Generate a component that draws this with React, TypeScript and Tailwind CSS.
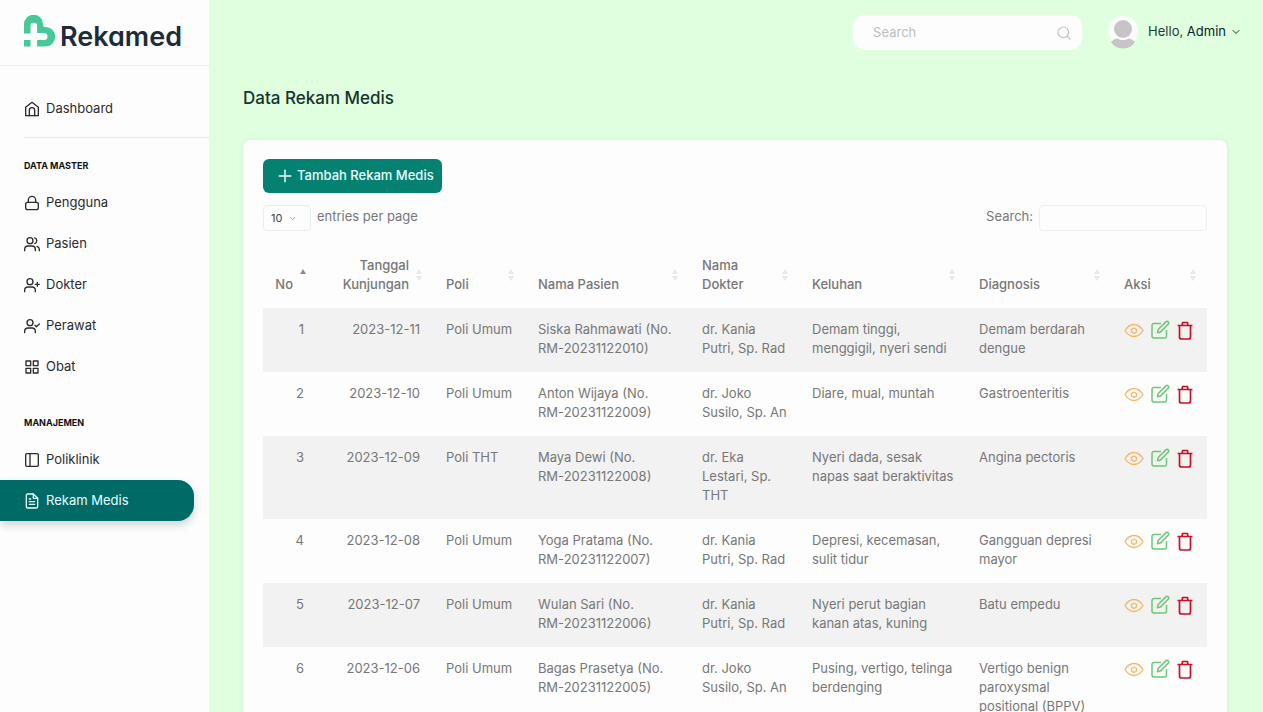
import type { ReactNode } from "react";
import clsx from "clsx";
import { ChevronDown, Plus, Search } from "lucide-react";

type IconProps = { children: ReactNode };

const MenuIcon = ({ children }: IconProps) => (
  <svg
    viewBox="0 0 24 24"
    className="size-4 shrink-0"
    fill="none"
    stroke="currentColor"
    strokeWidth={2}
    strokeLinecap="round"
    strokeLinejoin="round"
    aria-hidden="true"
  >
    {children}
  </svg>
);

const icons = {
  home: (
    <MenuIcon>
      <path d="M2.500 22V9.500L12 2l9.500 7.500V22Z" />
      <path d="M8 22v-8a4 4 0 0 1 8 0v8" />
    </MenuIcon>
  ),
  lock: (
    <MenuIcon>
      <rect x="2.500" y="11" width="19" height="11" rx="3" />
      <path d="M6.500 11V7.500a5.500 5.500 0 0 1 11 0V11" />
    </MenuIcon>
  ),
  users: (
    <MenuIcon>
      <circle cx="9" cy="7" r="4.500" />
      <path d="M1 22v-2a5 5 0 0 1 5-5h6a5 5 0 0 1 5 5v2" />
      <path d="M16 2.700a4.500 4.500 0 0 1 0 8.600" />
      <path d="M19.500 15.500a5 5 0 0 1 3.500 4.500v2" />
    </MenuIcon>
  ),
  userPlus: (
    <MenuIcon>
      <circle cx="9" cy="7" r="4.500" />
      <path d="M1 22v-2a5 5 0 0 1 5-5h6a5 5 0 0 1 5 5v2" />
      <path d="M20 8v6M17 11h6" />
    </MenuIcon>
  ),
  userCheck: (
    <MenuIcon>
      <circle cx="9" cy="7" r="4.500" />
      <path d="M1 22v-2a5 5 0 0 1 5-5h6a5 5 0 0 1 5 5v2" />
      <path d="m16.500 11 2.200 2.200L23 9" />
    </MenuIcon>
  ),
  grid: (
    <MenuIcon>
      <path d="M3 3h7v7H3zM14 3h7v7h-7zM3 14h7v7H3zM14 14h7v7h-7z" />
    </MenuIcon>
  ),
  layout: (
    <MenuIcon>
      <rect x="2.500" y="2.500" width="19" height="19" rx="2" />
      <path d="M9 2.500v19" />
    </MenuIcon>
  ),
  file: (
    <MenuIcon>
      <path d="M14 1.500H5.500a2 2 0 0 0-2 2v17a2 2 0 0 0 2 2h13a2 2 0 0 0 2-2V8Z" />
      <path d="M14 1.500V8h6.500M8 9h2M8 13h8M8 17h8" />
    </MenuIcon>
  ),
};

const masterLinks = [
  { label: "Pengguna", href: "#pengguna", icon: icons.lock },
  { label: "Pasien", href: "#pasien", icon: icons.users },
  { label: "Dokter", href: "#dokter", icon: icons.userPlus },
  { label: "Perawat", href: "#perawat", icon: icons.userCheck },
  { label: "Obat", href: "#obat", icon: icons.grid },
];

const manajemenLinks = [
  { label: "Poliklinik", href: "#poliklinik", icon: icons.layout },
  { label: "Rekam Medis", href: "#rekam-medis", icon: icons.file, active: true },
];

const columns = [
  { label: "No", width: "w-[54px]", numeric: true, sorted: true },
  { label: "Tanggal Kunjungan", width: "w-[116px]", numeric: true },
  { label: "Poli", width: "w-[92px]" },
  { label: "Nama Pasien", width: "w-[164px]" },
  { label: "Nama Dokter", width: "w-[110px]" },
  { label: "Keluhan", width: "w-[167px]" },
  { label: "Diagnosis", width: "w-[145px]" },
  { label: "Aksi", width: "w-[96px]" },
];

const records = [
  {
    tanggal: "2023-12-11",
    poli: "Poli Umum",
    pasien: "Siska Rahmawati",
    noRm: "RM-20231122010",
    dokter: "dr. Kania Putri, Sp. Rad",
    keluhan: "Demam tinggi, menggigil, nyeri sendi",
    diagnosis: "Demam berdarah dengue",
  },
  {
    tanggal: "2023-12-10",
    poli: "Poli Umum",
    pasien: "Anton Wijaya",
    noRm: "RM-20231122009",
    dokter: "dr. Joko Susilo, Sp. An",
    keluhan: "Diare, mual, muntah",
    diagnosis: "Gastroenteritis",
  },
  {
    tanggal: "2023-12-09",
    poli: "Poli THT",
    pasien: "Maya Dewi",
    noRm: "RM-20231122008",
    dokter: "dr. Eka Lestari, Sp. THT",
    keluhan: "Nyeri dada, sesak napas saat beraktivitas",
    diagnosis: "Angina pectoris",
  },
  {
    tanggal: "2023-12-08",
    poli: "Poli Umum",
    pasien: "Yoga Pratama",
    noRm: "RM-20231122007",
    dokter: "dr. Kania Putri, Sp. Rad",
    keluhan: "Depresi, kecemasan, sulit tidur",
    diagnosis: "Gangguan depresi mayor",
  },
  {
    tanggal: "2023-12-07",
    poli: "Poli Umum",
    pasien: "Wulan Sari",
    noRm: "RM-20231122006",
    dokter: "dr. Kania Putri, Sp. Rad",
    keluhan: "Nyeri perut bagian kanan atas, kuning",
    diagnosis: "Batu empedu",
  },
  {
    tanggal: "2023-12-06",
    poli: "Poli Umum",
    pasien: "Bagas Prasetya",
    noRm: "RM-20231122005",
    dokter: "dr. Joko Susilo, Sp. An",
    keluhan: "Pusing, vertigo, telinga berdenging",
    diagnosis: "Vertigo benign paroxysmal positional (BPPV)",
  },
];

const Logo = () => (
  <a href="#" className="flex items-start gap-1" aria-label="Rekamed">
    <svg viewBox="0 0 32 32" className="size-8" aria-hidden="true">
      <path
        d="M0 31.500V9.500a9.500 9.500 0 0 1 19-.500l.800 3H21.500a9.700 9.700 0 0 1 0 19.500Z"
        fill="#45c998"
      />
      <path
        d="M6.500 32V11a3.300 3.300 0 0 1 6.600 0v7H20a3.500 3.500 0 0 1 0 7h-6.900v7ZM0 18.500h7V25H0Z"
        fill="#fdfdfd"
      />
    </svg>
    <span className="pt-1.5 text-[27px] leading-8 font-semibold text-[#1d2b3c] [font-feature-settings:'cv11']">
      Rekamed
    </span>
  </a>
);

type MenuLinkProps = {
  label: string;
  href: string;
  icon: ReactNode;
  active?: boolean;
};

const MenuLink = ({ label, href, icon, active }: MenuLinkProps) => (
  <a
    href={href}
    aria-current={active ? "page" : undefined}
    className={clsx(
      "mr-[15px] flex h-[41px] items-center gap-1.5 pl-6 text-[13px]",
      active
        ? "rounded-r-2xl bg-[#006a66] text-[#e6ffff] shadow-[0_4px_8px_rgba(0,60,60,0.2)]"
        : "text-[#2b2b2b]"
    )}
  >
    {icon}
    {label}
  </a>
);

const SortMark = ({ sorted }: { sorted?: boolean }) => (
  <svg
    viewBox="0 0 8 14"
    className="absolute right-2.5 bottom-[26px] h-3.5 w-2"
    aria-hidden="true"
  >
    <path d="M4 1l3 5H1z" fill={sorted ? "#8d8d8d" : "#e8e8e8"} />
    {!sorted && <path d="M4 13l3-5H1z" fill="#e8e8e8" />}
  </svg>
);

const RowActions = () => (
  <div className="flex gap-1.5">
    <button type="button" aria-label="Lihat" className="text-[#f5b765]">
      <svg viewBox="0 0 20 20" className="size-5" fill="none" stroke="currentColor" strokeWidth="1.300">
        <path d="M1 10.500C3.500 6.500 6.500 4.500 10 4.500s6.500 2 9 6c-2.500 4-5.500 6-9 6s-6.500-2-9-6Z" />
        <path d="M10 8l2.500 1.500v2.500L10 13.300 7.500 12V9.500Z" strokeLinejoin="round" />
      </svg>
    </button>
    <button type="button" aria-label="Ubah" className="text-[#6cc873]">
      <svg viewBox="0 0 20 20" className="size-5" fill="none" stroke="currentColor" strokeWidth="1.500" strokeLinejoin="round">
        <path d="M11 3.500H4A2 2 0 0 0 2 5.500V16a2 2 0 0 0 2 2h10.500a2 2 0 0 0 2-2V10" />
        <path d="M7.500 12.700l.700-3.200 7.600-7.600a1.600 1.600 0 0 1 2.400 2.400l-7.600 7.600Z" />
      </svg>
    </button>
    <button type="button" aria-label="Hapus" className="text-[#c41225]">
      <svg viewBox="0 0 20 20" className="size-5" fill="none" stroke="currentColor" strokeWidth="1.700" strokeLinejoin="round">
        <path d="M1.500 5.500h15M3.500 5.500V17a2 2 0 0 0 2 2h7a2 2 0 0 0 2-2V5.500M6 5.500l.600-3h4.800l.600 3" />
      </svg>
    </button>
  </div>
);

export default function App() {
  return (
    <div className="flex min-h-screen bg-[#dfffdf] font-['Inter','Liberation_Sans',sans-serif] text-[13px] text-[#777]">
      <aside className="sticky top-0 h-screen w-[209px] shrink-0 bg-[#fdfdfd]">
        <div className="flex h-[66px] items-start border-b border-[#eeeeee] pt-[15px] pl-6">
          <Logo />
        </div>
        <nav aria-label="Menu utama" className="pt-[22px]">
          <MenuLink label="Dashboard" href="#dashboard" icon={icons.home} />
          <hr className="mt-2 ml-6 border-[#e8e8e8]" />
          <h2 className="mt-5 mb-2 pl-6 text-[9px] leading-4 font-bold text-[#111]">
            DATA MASTER
          </h2>
          {masterLinks.map((link) => (
            <MenuLink key={link.label} {...link} />
          ))}
          <h2 className="mt-7 mb-2 pl-6 text-[9px] leading-4 font-bold text-[#111]">
            MANAJEMEN
          </h2>
          {manajemenLinks.map((link) => (
            <MenuLink key={link.label} {...link} />
          ))}
        </nav>
      </aside>

      <div className="min-w-0 flex-1">
        {/* Top bar */}
        <header className="flex h-16 items-center justify-end pr-[21px]">
          <div className="relative">
            <input
              type="search"
              aria-label="Search"
              placeholder="Search"
              className="h-[35px] w-[229px] rounded-xl bg-[#fdfdfd] pr-10 pl-5 placeholder:text-[#bdbdbd]"
            />
            <Search
              size={16}
              strokeWidth={1.8}
              className="absolute top-2.5 right-2.5 text-[#bcc4bc]"
              aria-hidden="true"
            />
          </div>
          <button type="button" className="ml-[26px] flex items-center text-[#1f3a34]">
            <svg viewBox="0 0 30 34" className="mr-2.5 h-[34px] w-[30px]" aria-hidden="true">
              <circle cx="15" cy="16" r="15" fill="#fbfdfb" />
              <circle cx="15" cy="14" r="9" fill="#c6c4c6" />
              <path d="M3 27q3-3.500 6-3.500 6 3 12 0 3 0 6 3.500-4 6.500-12 6.500T3 27Z" fill="#c6c4c6" />
            </svg>
            <span>
              Hello, <span className="text-[#08231f]">Admin</span>
            </span>
            <ChevronDown size={12} className="ml-1" aria-hidden="true" />
          </button>
        </header>

        <main className="pr-[36px] pl-[34px]">
          <h1 className="pt-[22px] text-[17px] leading-6 font-medium text-[#17332f]">
            Data Rekam Medis
          </h1>

          <section className="mt-[30px] rounded-lg bg-[#fdfdfd] px-5 pt-[19px] pb-5 shadow-[0_0_4px_rgba(120,160,120,0.15)]">
            <button
              type="button"
              className="flex h-[34px] items-center gap-0.5 rounded-md bg-[#058172] pr-2 pl-3 font-medium text-[#e8ffff]"
            >
              <Plus size={20} strokeWidth={1.8} aria-hidden="true" />
              Tambah Rekam Medis
            </button>

            <div className="mt-3 flex items-center justify-between">
              <div className="flex items-center gap-1.5">
                <div className="relative">
                  <select
                    id="page-size"
                    defaultValue="10"
                    className="h-[26px] w-12 appearance-none rounded-sm border border-[#ececec] pl-[7px] text-[11px] text-[#444]"
                  >
                    <option>10</option>
                    <option>25</option>
                    <option>50</option>
                  </select>
                  <ChevronDown
                    size={9}
                    className="pointer-events-none absolute top-[9px] right-3.5 text-[#888]"
                    aria-hidden="true"
                  />
                </div>
                <label htmlFor="page-size" className="pb-0.5">
                  entries per page
                </label>
              </div>
              <div className="flex items-center gap-1.5">
                <label htmlFor="table-search" className="pb-0.5">
                  Search:
                </label>
                <input
                  id="table-search"
                  type="search"
                  className="h-[26px] w-[168px] rounded-sm border border-[#eeeeee] px-2"
                />
              </div>
            </div>

            <table className="mt-[13px] w-full table-fixed text-left leading-[19px]">
              <thead>
                <tr>
                  {columns.map((column) => (
                    <th
                      key={column.label}
                      scope="col"
                      aria-sort={column.sorted ? "ascending" : undefined}
                      className={clsx(
                        "relative pt-3 pr-6 pb-3.5 align-bottom font-medium",
                        column.width,
                        column.numeric ? "text-right" : "pl-[13px]"
                      )}
                    >
                      {column.label}
                      <SortMark sorted={column.sorted} />
                    </th>
                  ))}
                </tr>
              </thead>
              <tbody>
                {records.map((record, index) => (
                  <tr
                    key={record.tanggal}
                    className="align-top odd:bg-[#f2f2f2] [&>td]:pt-3 [&>td]:pb-3.5 [&>td]:pl-[13px]"
                  >
                    <td className="pr-[13px] text-right">{index + 1}</td>
                    <td className="pr-[13px] text-right whitespace-nowrap">{record.tanggal}</td>
                    <td className="whitespace-nowrap">{record.poli}</td>
                    <td className="pr-2.5">
                      {record.pasien} (No. <span className="whitespace-nowrap">{record.noRm})</span>
                    </td>
                    <td className="pr-2.5">{record.dokter}</td>
                    <td className="pr-2.5">{record.keluhan}</td>
                    <td className="pr-2.5">{record.diagnosis}</td>
                    <td>
                      <RowActions />
                    </td>
                  </tr>
                ))}
              </tbody>
            </table>
          </section>
        </main>
      </div>
    </div>
  );
}
